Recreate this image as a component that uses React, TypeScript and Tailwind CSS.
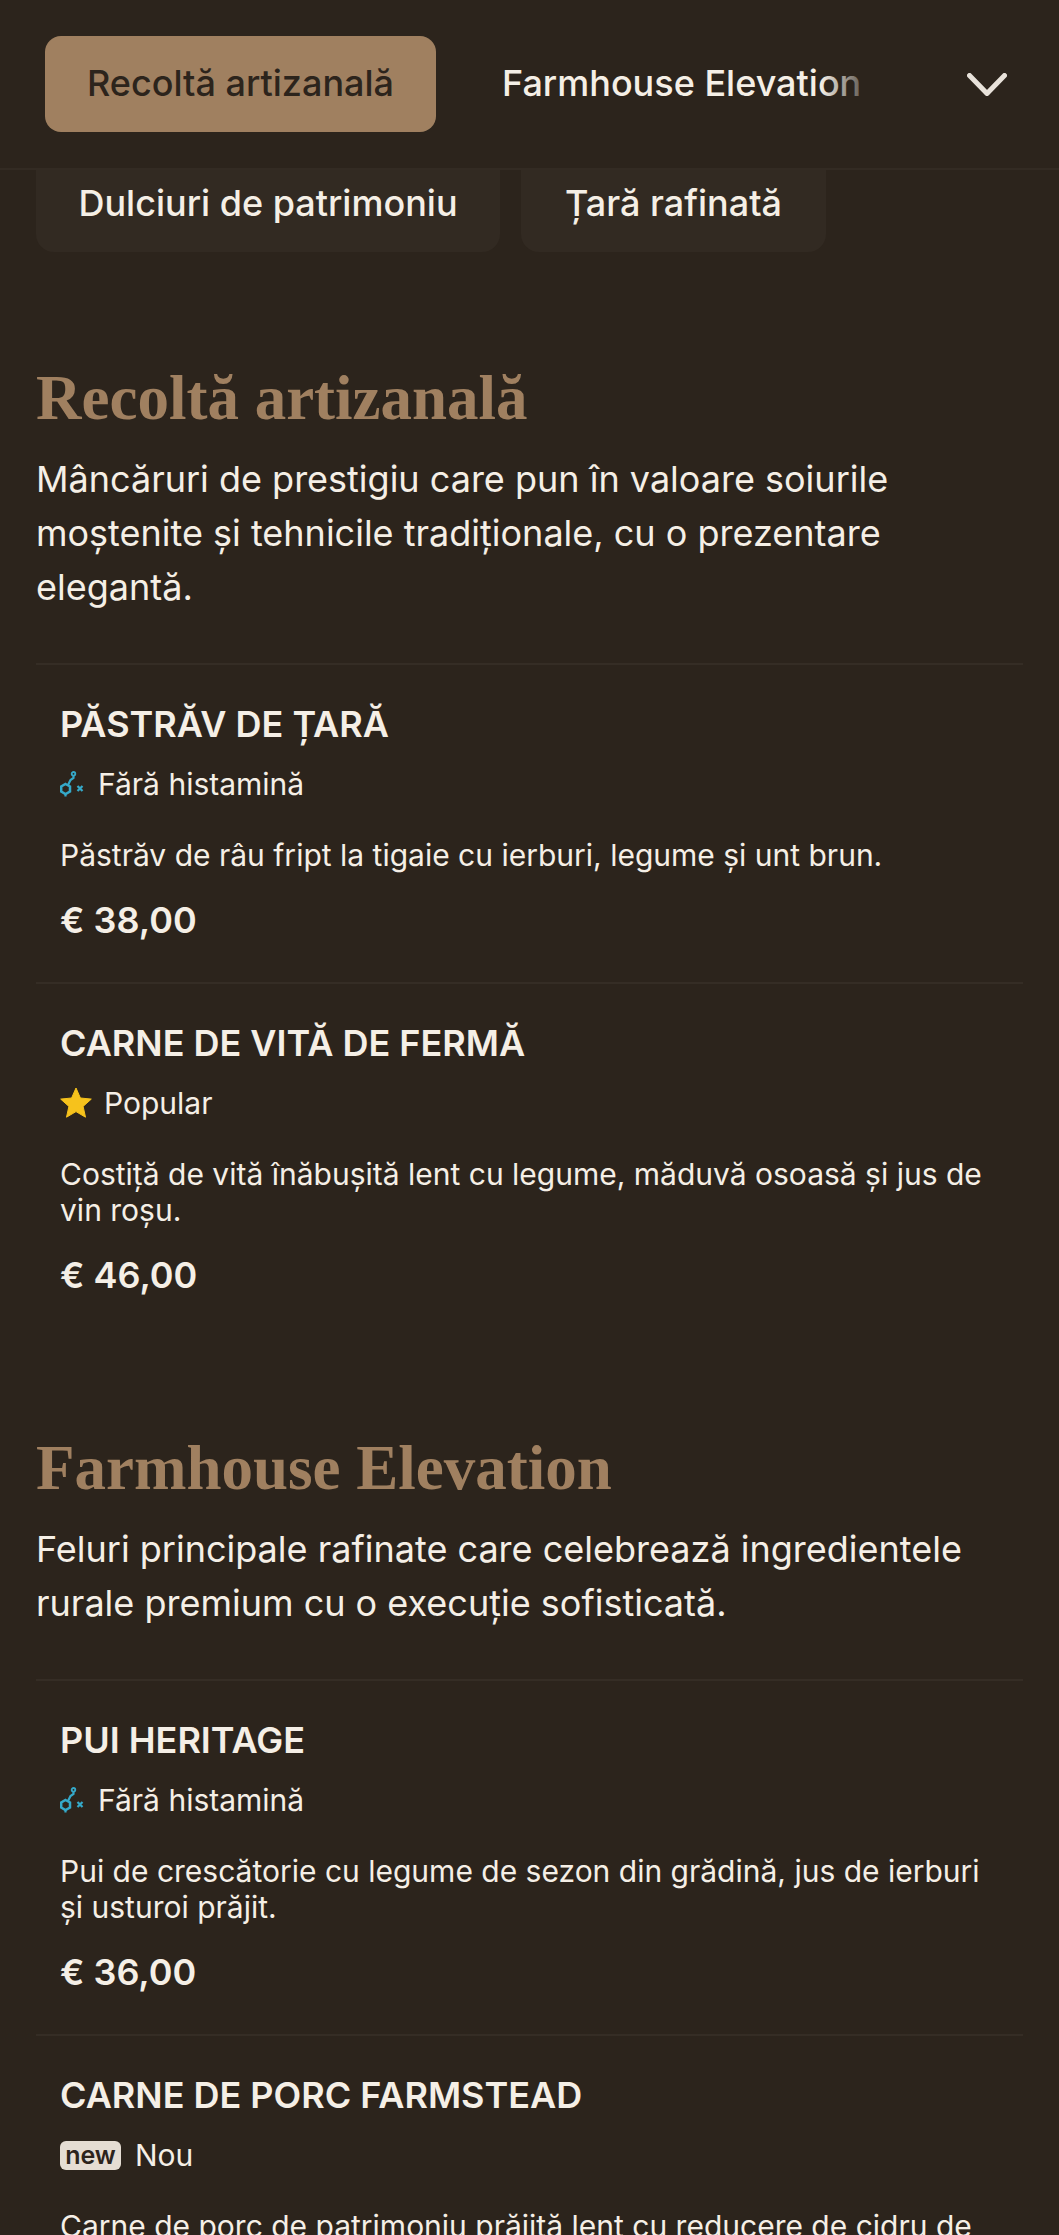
const inter = "font-['Inter','Liberation_Sans',sans-serif]"

type Tag = "histamine" | "popular" | "new"

type Item = {
  name: string
  tag: Tag
  description: string
  price?: string
}

function HistamineIcon() {
  return (
    <svg width="24" height="26" viewBox="0 0 24 26" fill="none" stroke="#35a9c9" strokeWidth="2.5" className="shrink-0">
      <path d="M5.5 13 L10 15.5 L10 20.5 L5.5 23 L1.2 20.5 L1.2 15.5 Z" />
      <path d="M5.5 23 V25.5 M8 14 L10.5 9 L13.5 7 V4.5" strokeWidth="2.2" />
      <circle cx="13.5" cy="2.8" r="1.8" strokeWidth="1.8" />
      <path d="M17.5 15 L22.5 20 M22.5 15 L17.5 20" strokeWidth="2.2" />
    </svg>
  )
}

function TagRow({ tag }: { tag: Tag }) {
  if (tag === "popular") {
    return (
      <div className="flex h-[40px] items-center gap-[12px] text-[30px] text-[#f5efe6]">
        <svg width="32" height="32" viewBox="0 0 32 32" className="shrink-0">
          <path
            d="M16 1 L20.4 11 L31.3 12.1 L23.1 19.4 L25.5 30.2 L16 24.6 L6.5 30.2 L8.9 19.4 L.7 12.1 L11.6 11 Z"
            fill="#f6c21c"
            stroke="#f6c21c"
            strokeLinejoin="round"
          />
        </svg>
        <span>Popular</span>
      </div>
    )
  }
  if (tag === "new") {
    return (
      <div className="flex h-[40px] items-center gap-[14px] text-[30px] text-[#f5efe6]">
        <span className="flex h-[29px] w-[61px] items-center justify-center rounded-[6px] bg-[#e5ddd3] text-[25px] leading-none font-semibold text-[#2c241c]">
          new
        </span>
        <span>Nou</span>
      </div>
    )
  }
  return (
    <div className="flex h-[40px] items-center gap-[14px] text-[30px] text-[#f5efe6]">
      <HistamineIcon />
      <span>Fără histamină</span>
    </div>
  )
}

function MenuItem({ item }: { item: Item }) {
  return (
    <div className="border-t-2 border-[#352d25] px-[24px] pt-[35px] pb-[38px]">
      <div className="text-[36px] leading-[48px] font-semibold text-[#f5efe6]">{item.name}</div>
      <div className="mt-[16px]">
        <TagRow tag={item.tag} />
      </div>
      <p className="mt-[33px] text-[30px] leading-[36px] text-[#f5efe6]">{item.description}</p>
      {item.price ? (
        <div className="mt-[23px] text-[36px] leading-[48px] font-semibold text-[#f5efe6]">{item.price}</div>
      ) : null}
    </div>
  )
}

function Section({ title, text, items }: { title: string; text: string; items: Item[] }) {
  return (
    <section>
      <h2 className="font-['Liberation_Serif',serif] text-[63px] leading-[78px] font-bold text-[#a08060]">{title}</h2>
      <p className="mt-[15px] text-[36px] leading-[54px] text-[#f5efe6]">{text}</p>
      <div className="mt-[49px]">
        {items.map((item) => (
          <MenuItem key={item.name} item={item} />
        ))}
      </div>
    </section>
  )
}

const harvest: Item[] = [
  {
    name: "PĂSTRĂV DE ȚARĂ",
    tag: "histamine",
    description: "Păstrăv de râu fript la tigaie cu ierburi, legume și unt brun.",
    price: "€ 38,00",
  },
  {
    name: "CARNE DE VITĂ DE FERMĂ",
    tag: "popular",
    description: "Costiță de vită înăbușită lent cu legume, măduvă osoasă și jus de vin roșu.",
    price: "€ 46,00",
  },
]

const farmhouse: Item[] = [
  {
    name: "PUI HERITAGE",
    tag: "histamine",
    description: "Pui de crescătorie cu legume de sezon din grădină, jus de ierburi și usturoi prăjit.",
    price: "€ 36,00",
  },
  {
    name: "CARNE DE PORC FARMSTEAD",
    tag: "new",
    description: "Carne de porc de patrimoniu prăjită lent cu reducere de cidru de mere și rădăcinoase.",
  },
]

export default function App() {
  return (
    <div className={`h-[2235px] overflow-hidden bg-[#2c241c] ${inter}`}>
      <header className="flex h-[170px] items-center border-b-2 border-[#332b23] pr-[52px] pl-[45px]">
        <button className="h-[96px] w-[391px] rounded-[16px] bg-[#a08060] pb-[2px] text-[36px] font-medium text-[#2c241c]">
          Recoltă artizanală
        </button>
        <div className="relative ml-[66px] pb-[2px] text-[36px] font-medium whitespace-nowrap text-[#f5efe6]">
          Farmhouse Elevation
          <div className="absolute top-0 right-0 h-full w-[40px] bg-linear-to-r from-transparent to-[#2c241c]/70" />
        </div>
        <svg width="40" height="23" viewBox="0 0 40 23" fill="none" className="ml-auto">
          <path d="M2.5 2.5 L20 20.5 L37.5 2.5" stroke="#e8e2da" strokeWidth="5" strokeLinecap="round" strokeLinejoin="round" />
        </svg>
      </header>

      <div className="flex gap-[21px] pl-[36px]">
        <div className="flex h-[82px] w-[464px] items-start justify-center rounded-b-[18px] bg-[#322a22] pt-[6px] text-[36px] font-medium text-[#f5efe6]">
          Dulciuri de patrimoniu
        </div>
        <div className="flex h-[82px] w-[305px] items-start justify-center rounded-b-[18px] bg-[#322a22] pt-[6px] text-[36px] font-medium text-[#f5efe6]">
          Țară rafinată
        </div>
      </div>

      <main className="px-[36px] pt-[107px]">
        <Section
          title="Recoltă artizanală"
          text="Mâncăruri de prestigiu care pun în valoare soiurile moștenite și tehnicile tradiționale, cu o prezentare elegantă."
          items={harvest}
        />
        <div className="h-[92px]" />
        <Section
          title="Farmhouse Elevation"
          text="Feluri principale rafinate care celebrează ingredientele rurale premium cu o execuție sofisticată."
          items={farmhouse}
        />
      </main>
    </div>
  )
}
